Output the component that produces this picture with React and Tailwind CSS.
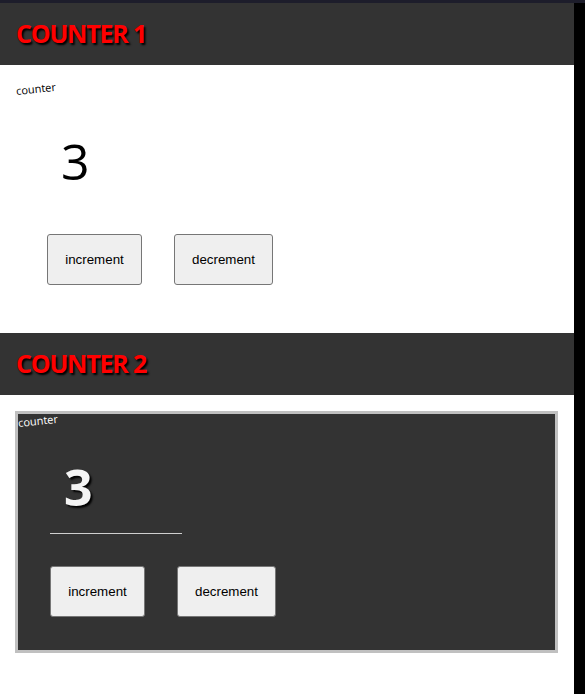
import React, { useState } from "react";

const sans = { fontFamily: '"Open Sans", "Noto Sans", sans-serif' };

function Header({ title }) {
    return (
        <div className="h-[62px] bg-[#333333] flex items-center px-4">
            <h1
                className="text-[25px] font-bold text-[#ff0000] tracking-[-1.2px] [text-shadow:2px_2px_2px_#000]"
                style={sans}
            >
                {title}
            </h1>
        </div>
    );
}

function Counter({ dark }) {
    const [count, setCount] = useState(3);
    const btn =
        "h-[51px] bg-[#efefef] border border-[#767676] rounded-[3px] text-[13.333px] text-black font-['Liberation_Sans',Arial,sans-serif]";
    return (
        <div className={dark ? "text-white" : "text-black"}>
            <div className="text-[11px] leading-[15px] -rotate-[6deg] origin-left w-fit" style={sans}>
                counter
            </div>
            <div
                className={
                    dark
                        ? "mt-[32px] ml-[46px] text-[50px] leading-[50px] font-bold text-[#f4f4f4] [text-shadow:2px_2px_2px_#000]"
                        : "mt-[39px] ml-[45px] text-[50px] leading-[48px]"
                }
                style={sans}
            >
                {count}
            </div>
            {dark ? (
                <div className="ml-[32px] mt-[21px] w-[132px] h-px bg-[#cfcfcf]" />
            ) : null}
            <div className={dark ? "ml-[32px] mt-[32px] flex gap-[32px]" : "ml-[31px] mt-[49px] flex gap-[32px]"}>
                <button className={btn + " w-[95px]"} onClick={() => setCount(count + 1)}>
                    increment
                </button>
                <button className={btn + " w-[99px]"} onClick={() => setCount(count - 1)}>
                    decrement
                </button>
            </div>
        </div>
    );
}

export default function App() {
    return (
        <div className="w-[585px] h-[694px] bg-white overflow-hidden">
            <div className="h-[3px] bg-[#1d1d2b]" />
            <div className="flex h-[691px]">
                <div className="w-[574px]">
                    <Header title="COUNTER 1" />
                    <div className="h-[268px] pl-4 pt-[18px]">
                        <Counter />
                    </div>
                    <Header title="COUNTER 2" />
                    <div className="px-[15px] pt-4">
                        <div className="h-[242px] w-[543px] border-[3px] border-[#c0c0c0] bg-[#333333] pt-[1px]">
                            <Counter dark />
                        </div>
                    </div>
                </div>
                <div className="w-[11px] bg-black" />
            </div>
        </div>
    );
}
